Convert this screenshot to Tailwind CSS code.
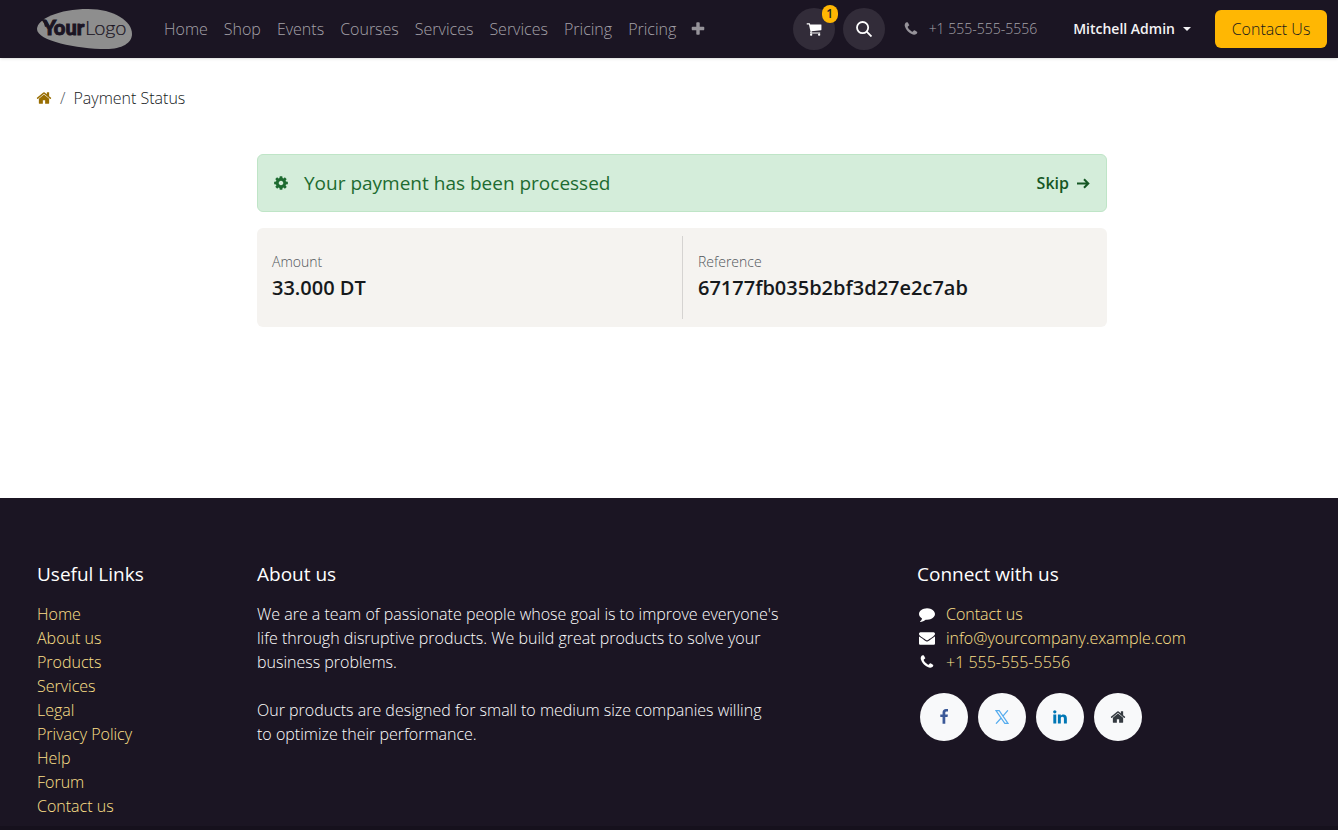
<!DOCTYPE html>
<html lang="en">
<head>
<meta charset="utf-8">
<meta name="viewport" content="width=device-width, initial-scale=1">
<title>Payment Status</title>
<script src="https://cdn.jsdelivr.net/npm/@tailwindcss/browser@4"></script>
</head>
<body class="flex min-h-screen flex-col bg-white font-['Open_Sans','Noto_Sans',sans-serif] text-base leading-6 font-light text-[#16191c]">
<svg class="hidden" aria-hidden="true">
  <symbol id="home" viewBox="0 0 1792 1792"><path d="M1472 992v480q0 26-19 45t-45 19h-384v-384h-256v384h-384q-26 0-45-19t-19-45v-480q0-1 .5-3t.5-3l575-474 575 474q1 2 1 6zm223-69l-62 74q-8 9-21 11h-3q-13 0-21-7l-692-577-692 577q-12 8-24 7-13-2-21-11l-62-74q-8-10-7-23.5t11-21.5l719-599q32-26 76-26t76 26l244 204v-195q0-14 9-23t23-9h192q14 0 23 9t9 23v408l219 182q10 8 11 21.5t-7 23.5z"/></symbol>
  <symbol id="phone" viewBox="0 0 1792 1792"><path d="M1600 1240q0 27-10 70.5t-21 68.5q-21 50-122 106-94 51-186 51-27 0-53-3.5t-57.5-12.5-47-14.5-55.5-20.5-49-18q-98-35-175-83-127-79-264-216t-216-264q-48-77-83-175-3-9-18-49t-20.5-55.5-14.5-47-12.5-57.5-3.5-53q0-92 51-186 56-101 106-122 25-11 68.5-21t70.5-10q14 0 21 3 18 6 53 76 11 19 30 54t35 63.5 31 53.5q3 4 17.5 25t21.5 35.5 7 28.5q0 20-28.5 50t-62 55-62 53-28.5 46q0 9 5 22.5t8.5 20.5 14 24 11.5 19q76 137 174 235t235 174q2 1 19 11.5t24 14 20.5 8.5 22.5 5q18 0 46-28.5t53-62 55-62 50-28.5q14 0 28.5 7t35.5 21.5 25 17.5q25 15 53.5 31t63.5 35 54 30q70 35 76 53 3 7 3 21z"/></symbol>
</svg>

<header class="flex h-[58px] items-center bg-[#1b1523] pr-[11px] pl-[37px] text-[#a5a2a9] shadow-sm">
  <a href="#" aria-label="Your Logo" class="shrink-0">
    <svg class="h-10 w-[95px]" viewBox="0 0 95 40">
      <path fill="#8e8e8e" d="M0 20C0 10 22 0 51 0c26 0 44 12 44 25 0 9-10 15-26 15C40 40 0 32 0 20z"/>
      <path fill="#1b1523" d="M4 10l5 1 3 5-4 2-1-4z"/>
      <text x="6" y="26" fill="#1b1523" stroke="#1b1523" stroke-width="1" font-family="Lato, sans-serif" font-size="20" font-weight="900">Your</text>
      <text x="48" y="26" fill="#1b1523" stroke="#1b1523" stroke-width=".2" font-family="Lato, sans-serif" font-size="20" font-weight="300">Logo</text>
    </svg>
  </a>
  <nav class="ml-8 flex items-center gap-4" aria-label="Main">
    <a href="#">Home</a>
    <a href="#">Shop</a>
    <a href="#">Events</a>
    <a href="#">Courses</a>
    <a href="#">Services</a>
    <a href="#">Services</a>
    <a href="#">Pricing</a>
    <a href="#">Pricing</a>
    <button type="button" aria-label="More" class="-ml-0.5 text-[#96939a]">
      <svg class="size-4 fill-current" viewBox="0 0 1792 1792"><path d="M1600 736v192q0 40-28 68t-68 28h-416v416q0 40-28 68t-68 28h-192q-40 0-68-28t-28-68v-416h-416q-40 0-68-28t-28-68v-192q0-40 28-68t68-28h416v-416q0-40 28-68t68-28h192q40 0 68 28t28 68v416h416q40 0 68 28t28 68z"/></svg>
    </button>
  </nav>
  <div class="ml-auto flex shrink-0 items-center">
    <a href="#" aria-label="Cart" class="relative flex size-[42px] items-center justify-center rounded-full bg-[#322c39] text-white">
      <svg class="size-4 fill-current" viewBox="0 0 1792 1792"><path d="M704 1536q0 52-38 90t-90 38-90-38-38-90 38-90 90-38 90 38 38 90zm896 0q0 52-38 90t-90 38-90-38-38-90 38-90 90-38 90 38 38 90zm128-1088v512q0 24-16.5 42.5t-40.5 21.5l-1044 122q13 60 13 70 0 16-24 64h920q26 0 45 19t19 45-19 45-45 19h-1024q-26 0-45-19t-19-45q0-11 8-31.5t16-36 21.5-40 15.5-29.5l-177-823h-204q-26 0-45-19t-19-45 19-45 45-19h256q16 0 28.5 6.5t19.5 15.5 13 24.5 8 26 5.5 29.5 4.5 26h1201q26 0 45 19t19 45z"/></svg>
      <span class="absolute -top-[3px] -right-[3px] flex h-[18px] w-4 items-center justify-center rounded-full bg-[#ffb703] text-xs font-semibold text-[#212529]">1</span>
    </a>
    <button type="button" aria-label="Search" class="ml-2 flex size-[42px] items-center justify-center rounded-full bg-[#322c39] text-white">
      <svg class="size-4" viewBox="0 0 16 16" fill="none" stroke="currentColor" stroke-width="1.8"><circle cx="6.6" cy="6.6" r="5.6"/><path d="M10.7 10.7l4.8 4.8"/></svg>
    </button>
    <a href="#" class="ml-[18px] flex items-center gap-[10px] text-sm leading-6"><svg class="size-4 fill-[#96939a]"><use href="#phone"/></svg>+1 555-555-5556</a>
    <button type="button" class="ml-9 flex items-center gap-2 text-sm font-semibold text-[#f4f3f5]">Mitchell Admin
      <svg class="h-1 w-2 fill-current" viewBox="0 0 8 4"><path d="M0 0h8L4 4z"/></svg>
    </button>
    <a href="#" class="ml-6 flex h-[38px] w-28 items-center justify-center rounded-md bg-[#ffb703] text-[#16191c]">Contact Us</a>
  </div>
</header>

<main class="flex-1 pr-[11px] pb-[171px] pl-[37px]">
  <nav class="flex items-center gap-2 pt-7" aria-label="Breadcrumb">
    <a href="#" aria-label="Home" class="text-[#996e02]"><svg class="-ml-px size-4 fill-current"><use href="#home"/></svg></a>
    <span class="text-[#50585f]">/</span>
    <span>Payment Status</span>
  </nav>
  <div class="grid grid-cols-12 gap-x-[30px] pt-11">
    <div class="col-span-8 col-start-3">
      <div class="flex h-[58px] items-center rounded-md border border-[#bfe5c7] bg-[#d4edda] px-[15px] text-[#1d6b30]" role="status">
        <svg class="size-4 fill-current" viewBox="0 0 1792 1792"><path d="M1152 896q0-106-75-181t-181-75-181 75-75 181 75 181 181 75 181-75 75-181zm512-109v222q0 12-8 23t-20 13l-185 28q-19 54-39 91 35 50 107 138 10 12 10 25t-9 23q-27 37-99 108t-94 71q-12 0-26-9l-138-108q-44 23-91 38-16 136-29 186-7 28-36 28h-222q-14 0-24.5-8.5t-11.5-21.5l-28-184q-49-16-90-37l-141 107q-10 9-25 9-14 0-25-11-126-114-165-168-7-10-7-23 0-12 8-23 15-21 51-66.5t54-70.5q-27-50-41-99l-183-27q-13-2-21-12.5t-8-23.5v-222q0-12 8-23t19-13l186-28q14-46 39-92-40-57-107-138-10-12-10-24 0-10 9-23 26-36 98.5-107.5t94.5-71.5q13 0 26 10l138 107q44-23 91-38 16-136 29-186 7-28 36-28h222q14 0 24.5 8.5t11.5 21.5l28 184q49 16 90 37l142-107q9-9 24-9 13 0 25 10 129 119 165 170 7 8 7 22 0 12-8 23-15 21-51 66.5t-54 70.5q26 50 41 98l183 28q13 2 21 12.5t8 23.5z"/></svg>
        <p class="ml-[15px] text-[19px] font-normal">Your payment has been processed</p>
        <a href="#" class="ml-auto flex items-center gap-2 font-semibold text-[#155724]">Skip
          <svg class="size-[14px]" viewBox="0 0 14 14" fill="none" stroke="currentColor" stroke-width="2"><path d="M0 7.500h11M7 3.200l4.300 4.300L7 11.800"/></svg>
        </a>
      </div>
      <dl class="mt-4 grid grid-cols-2 rounded-md bg-[#f5f3f0] py-2">
        <div class="px-[15px] pt-4 pb-[15px]">
          <dt class="text-sm leading-5 text-[#50555a]">Amount</dt>
          <dd class="text-[20px] leading-8 font-semibold">33.000 DT</dd>
        </div>
        <div class="border-l border-[#d5d3d1] px-[15px] pt-4 pb-[15px]">
          <dt class="text-sm leading-5 text-[#50555a]">Reference</dt>
          <dd class="text-[20px] leading-8 font-semibold">67177fb035b2bf3d27e2c7ab</dd>
        </div>
      </dl>
    </div>
  </div>
</main>

<footer class="bg-[#1b1523] text-white">
  <div class="grid grid-cols-12 gap-x-[30px] pt-16 pr-[11px] pb-2 pl-[37px]">
    <section class="col-span-2">
      <h2 class="mb-4 text-[19px] font-normal">Useful Links</h2>
      <ul class="text-[#ffe08a]">
        <li><a href="#">Home</a></li>
        <li><a href="#">About us</a></li>
        <li><a href="#">Products</a></li>
        <li><a href="#">Services</a></li>
        <li><a href="#">Legal</a></li>
        <li><a href="#">Privacy Policy</a></li>
        <li><a href="#">Help</a></li>
        <li><a href="#">Forum</a></li>
        <li><a href="#">Contact us</a></li>
      </ul>
    </section>
    <section class="col-span-5">
      <h2 class="mb-4 text-[19px] font-normal">About us</h2>
      <p class="-mr-3">We are a team of passionate people whose goal is to improve everyone's life through disruptive products. We build great products to solve your business problems.</p>
      <p class="mt-6">Our products are designed for small to medium size companies willing to optimize their performance.</p>
    </section>
    <section class="col-span-4 col-start-9">
      <h2 class="mb-4 text-[19px] font-normal">Connect with us</h2>
      <ul>
        <li class="flex items-center gap-[11px] pl-0.5"><svg class="size-4 fill-current" viewBox="0 0 1792 1792"><path d="M1792 896q0 174-120 321.500t-326 233-450 85.500q-70 0-145-8-198 175-460 242-49 14-114 22-17 2-30.500-9t-17.500-29v-1q-3-4-.5-12t2-10 4.500-9.500l6-9 7-8.500 8-9q7-8 31-34.500t34.500-38 31-39.500 32.500-51 27-59 26-76q-157-89-247.500-220t-90.500-281q0-130 71-248.500t191-204.500 286-136.500 348-50.500q244 0 450 85.500t326 233 120 321.500z"/></svg><a href="#" class="text-[#ffe08a]">Contact us</a></li>
        <li class="flex items-center gap-[11px] pl-0.5"><svg class="size-4 fill-current" viewBox="0 0 1792 1792"><path d="M1792 710v794q0 66-47 113t-113 47h-1472q-66 0-113-47t-47-113v-794q44 49 101 87 362 246 497 345 57 42 92.500 65.500t94.500 48 110 24.500h2q51 0 110-24.500t94.500-48 92.500-65.500q170-123 498-345 57-39 100-87zm0-294q0 79-49 151t-122 123q-376 261-468 325-10 7-42.500 31t-54 38.500-52 32.500-57.500 27-50 9h-2q-23 0-50-9t-57.500-27-52-32.500-54-38.500-42.500-31q-91-64-262-182.500t-205-142.500q-62-42-117-115.500t-55-136.500q0-78 41.500-130t118.500-52h1472q65 0 112.500 47t47.500 113z"/></svg><a href="#" class="text-[#ffe08a]">info@yourcompany.example.com</a></li>
        <li class="flex items-center gap-[11px] pl-0.5"><svg class="size-4 fill-current"><use href="#phone"/></svg><a href="#" class="text-[#ffe08a]">+1 555-555-5556</a></li>
      </ul>
      <div class="mt-[19px] flex gap-[10px] pl-[3px]">
        <a href="#" aria-label="Facebook" class="flex size-12 items-center justify-center rounded-full bg-[#f8f9fa] text-[#3b5998]"><svg class="size-4 fill-current" viewBox="0 0 1792 1792"><path d="M1343 12v264h-157q-86 0-116 36t-30 108v189h293l-39 296h-254v759h-306v-759h-255v-296h255v-218q0-186 104-288.500t277-102.500q147 0 228 12z"/></svg></a>
        <a href="#" aria-label="X" class="flex size-12 items-center justify-center rounded-full bg-[#f8f9fa] text-[#55acee]"><svg class="size-[14px]" viewBox="0 0 14 14" fill="none" stroke="currentColor" stroke-width="1.200"><path d="M1 .7h3.200l8.800 12.600H9.800zM12.900.3L7.900 6.100M6.200 8L1 13.700"/></svg></a>
        <a href="#" aria-label="LinkedIn" class="flex size-12 items-center justify-center rounded-full bg-[#f8f9fa] text-[#0077b5]"><svg class="size-4 fill-current" viewBox="0 0 1792 1792"><path d="M477 625v991h-330v-991h330zm21-306q1 73-50.500 122t-135.500 49h-2q-82 0-132-49t-50-122q0-74 51.500-122.500t134.500-48.500 133 48.500 51 122.500zm1166 729v568h-329v-530q0-105-40.500-164.500t-126.500-59.500q-63 0-105.500 34.500t-63.500 85.500q-11 30-11 81v553h-329q2-399 2-647t-1-296l-1-48h329v144h-2q20-32 41-56t56.500-52 87-43.500 114.500-15.500q171 0 275 113.500t104 332.500z"/></svg></a>
        <a href="#" aria-label="Website" class="flex size-12 items-center justify-center rounded-full bg-[#f8f9fa] text-[#343a40]"><svg class="size-4 fill-current"><use href="#home"/></svg></a>
      </div>
    </section>
  </div>
  <div class="h-1 bg-[#16111d]"></div>
</footer>
</body>
</html>
